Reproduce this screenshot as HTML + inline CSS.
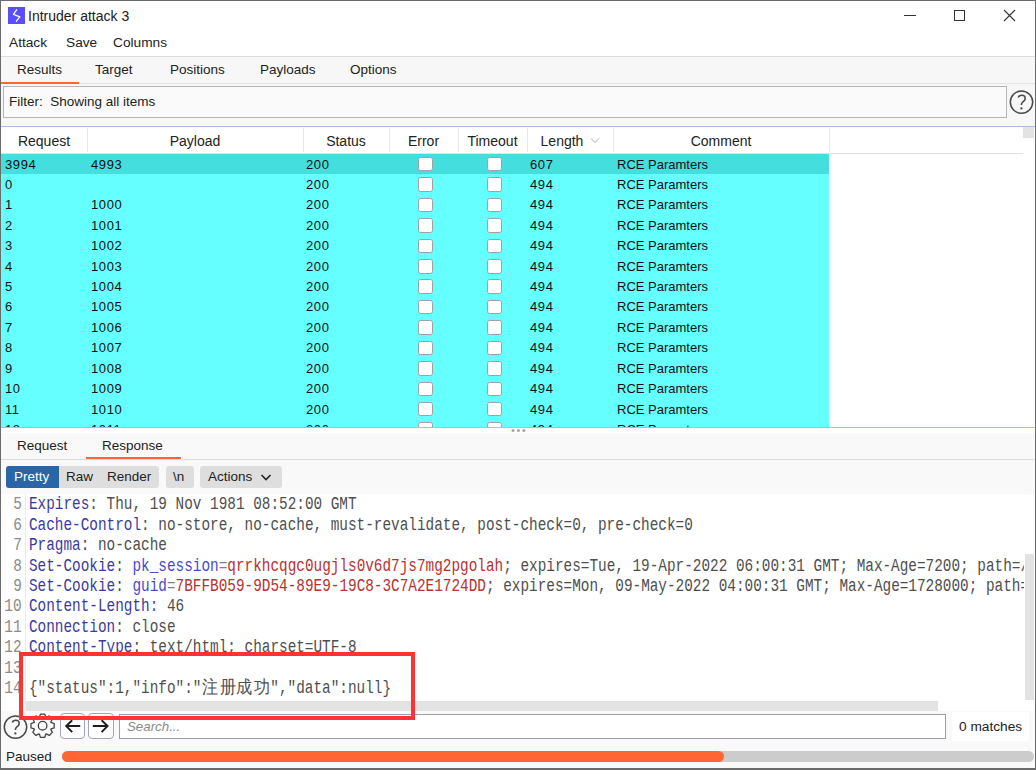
<!DOCTYPE html>
<html><head><meta charset="utf-8">
<style>
*{margin:0;padding:0;box-sizing:border-box}
html,body{width:1036px;height:770px;overflow:hidden;background:#fff}
body{position:relative;font-family:"Liberation Sans",sans-serif;font-size:14px;color:#222}
.a{position:absolute;white-space:nowrap}
.t{position:absolute;white-space:nowrap;line-height:1}
.code{font-family:"Liberation Mono",monospace;white-space:pre}
</style></head><body>
<!-- window border -->
<div class="a" style="left:0;top:0;width:1036px;height:770px;border:1px solid #6b6b6b;border-bottom:2px solid #6b6b6b;z-index:50;pointer-events:none"></div>

<!-- title bar -->
<div class="a" style="left:8px;top:7px;width:17px;height:17px;background:#5a4dfc">
<svg width="17" height="17" viewBox="0 0 17 17"><path d="M8.6 2.8 L5.5 7.4 L11.8 9.8 L8.4 14.2" fill="none" stroke="#fff" stroke-width="1.3" stroke-linejoin="round" stroke-linecap="round"/></svg>
</div>
<div class="t" style="left:28px;top:8.6px;font-size:14px;color:#1a1a1a">Intruder attack 3</div>
<!-- window controls -->
<div class="a" style="left:904px;top:15px;width:12px;height:1px;background:#333"></div>
<div class="a" style="left:954px;top:10px;width:11px;height:11px;border:1px solid #333"></div>
<svg class="a" style="left:1003px;top:9px" width="13" height="13" viewBox="0 0 13 13"><path d="M1 1 L12 12 M12 1 L1 12" stroke="#333" stroke-width="1.1"/></svg>

<!-- menu bar -->
<div class="t" style="left:9px;top:36px;font-size:13.7px">Attack</div>
<div class="t" style="left:66px;top:36px;font-size:13.7px">Save</div>
<div class="t" style="left:113px;top:36px;font-size:13.7px">Columns</div>
<div class="a" style="left:0;top:56px;width:1036px;height:1px;background:#dcdcdc"></div>

<!-- tabs -->
<div class="a" style="left:0;top:57px;width:1036px;height:70px;background:#f7f7f7"></div>
<div class="t" style="left:17px;top:62.6px;font-size:13.5px">Results</div>
<div class="t" style="left:95px;top:62.6px;font-size:13.5px">Target</div>
<div class="t" style="left:170px;top:62.6px;font-size:13.5px">Positions</div>
<div class="t" style="left:260px;top:62.6px;font-size:13.5px">Payloads</div>
<div class="t" style="left:350px;top:62.6px;font-size:13.5px">Options</div>
<div class="a" style="left:1px;top:83px;width:1034px;height:1px;background:#e4e4e4"></div>
<div class="a" style="left:1px;top:82px;width:78px;height:2px;background:#ff6633"></div>

<!-- filter -->
<div class="a" style="left:3px;top:86px;width:1004px;height:32px;border:1px solid #b5b5b5;background:#fafafa"></div>
<div class="t" style="left:9px;top:95px;font-size:13.5px">Filter:&nbsp; Showing all items</div>
<svg class="a" style="left:0;top:0;overflow:visible" width="1" height="1"><g fill="none" stroke="#4a4a4a" stroke-width="1.5"><circle cx="1021.5" cy="102.1" r="11.2"/><path d="M1018.30 97.60C1018.80 95.90 1020.00 95.30 1021.70 95.30C1023.80 95.30 1025.20 96.60 1025.20 98.40C1025.20 100.30 1023.90 101.00 1022.70 102.00C1021.80 102.80 1021.40 103.50 1021.40 105.00" stroke-width="1.6"/></g><circle cx="1021.40" cy="108.40" r="1.15" fill="#4a4a4a"/></svg>

<!-- table -->
<div class="a" style="left:1px;top:126px;width:1034px;height:1px;background:#a7bfe3"></div>
<div class="a" style="left:1px;top:427px;width:1034px;height:1px;background:#a7bfe3"></div>
<div id="table"><div class="a" style="left:1px;top:127px;width:1022px;height:26px;background:#fff"></div>
<div class="a" style="left:87px;top:128px;width:1px;height:24px;background:#e6e6e6"></div>
<div class="a" style="left:303px;top:128px;width:1px;height:24px;background:#e6e6e6"></div>
<div class="a" style="left:389px;top:128px;width:1px;height:24px;background:#e6e6e6"></div>
<div class="a" style="left:458px;top:128px;width:1px;height:24px;background:#e6e6e6"></div>
<div class="a" style="left:527px;top:128px;width:1px;height:24px;background:#e6e6e6"></div>
<div class="a" style="left:613px;top:128px;width:1px;height:24px;background:#e6e6e6"></div>
<div class="a" style="left:829px;top:128px;width:1px;height:24px;background:#e6e6e6"></div>
<div class="a" style="left:1px;top:153px;width:1022px;height:1px;background:#e2e2e2"></div>
<div class="t" style="left:1px;width:86px;top:134px;text-align:center;font-size:14px">Request</div>
<div class="t" style="left:87px;width:216px;top:134px;text-align:center;font-size:14px">Payload</div>
<div class="t" style="left:303px;width:86px;top:134px;text-align:center;font-size:14px">Status</div>
<div class="t" style="left:389px;width:69px;top:134px;text-align:center;font-size:14px">Error</div>
<div class="t" style="left:458px;width:69px;top:134px;text-align:center;font-size:14px">Timeout</div>
<div class="t" style="left:525px;width:74px;top:134px;text-align:center;font-size:14px">Length</div>
<svg class="a" style="left:590px;top:137px" width="10" height="7" viewBox="0 0 10 7"><path d="M1 1.5 L5 5.5 L9 1.5" fill="none" stroke="#aaa" stroke-width="1"/></svg>
<div class="t" style="left:613px;width:216px;top:134px;text-align:center;font-size:14px">Comment</div>
<div class="a" style="left:1023px;top:127px;width:11px;height:11px;background:#e3e3e3"></div>
<div class="a" style="left:1px;top:154px;width:1034px;height:273px;overflow:hidden">
<div class="a" style="left:0;top:-0.10px;width:828px;height:21.02px;background:#45dede"></div>
<div class="t" style="left:4px;top:3.50px;font-size:13px;letter-spacing:0.6px;color:#111">3994</div>
<div class="t" style="left:90px;top:3.50px;font-size:13px;letter-spacing:0.6px;color:#111">4993</div>
<div class="t" style="left:305px;top:3.50px;font-size:13px;letter-spacing:0.6px;color:#111">200</div>
<div class="t" style="left:529px;top:3.50px;font-size:13px;letter-spacing:0.6px;color:#111">607</div>
<div class="t" style="left:616px;top:3.50px;font-size:13px;color:#111">RCE Paramters</div>
<div class="a" style="left:417px;top:2.90px;width:14.5px;height:14.5px;background:#fff;border:1px solid #a0a0a0;border-radius:2.5px"></div>
<div class="a" style="left:486px;top:2.90px;width:14.5px;height:14.5px;background:#fff;border:1px solid #a0a0a0;border-radius:2.5px"></div>
<div class="a" style="left:0;top:20.32px;width:828px;height:21.02px;background:#66ffff"></div>
<div class="t" style="left:4px;top:23.92px;font-size:13px;letter-spacing:0.6px;color:#111">0</div>
<div class="t" style="left:305px;top:23.92px;font-size:13px;letter-spacing:0.6px;color:#111">200</div>
<div class="t" style="left:529px;top:23.92px;font-size:13px;letter-spacing:0.6px;color:#111">494</div>
<div class="t" style="left:616px;top:23.92px;font-size:13px;color:#111">RCE Paramters</div>
<div class="a" style="left:417px;top:23.32px;width:14.5px;height:14.5px;background:#fff;border:1px solid #a0a0a0;border-radius:2.5px"></div>
<div class="a" style="left:486px;top:23.32px;width:14.5px;height:14.5px;background:#fff;border:1px solid #a0a0a0;border-radius:2.5px"></div>
<div class="a" style="left:0;top:40.74px;width:828px;height:21.02px;background:#66ffff"></div>
<div class="t" style="left:4px;top:44.34px;font-size:13px;letter-spacing:0.6px;color:#111">1</div>
<div class="t" style="left:90px;top:44.34px;font-size:13px;letter-spacing:0.6px;color:#111">1000</div>
<div class="t" style="left:305px;top:44.34px;font-size:13px;letter-spacing:0.6px;color:#111">200</div>
<div class="t" style="left:529px;top:44.34px;font-size:13px;letter-spacing:0.6px;color:#111">494</div>
<div class="t" style="left:616px;top:44.34px;font-size:13px;color:#111">RCE Paramters</div>
<div class="a" style="left:417px;top:43.74px;width:14.5px;height:14.5px;background:#fff;border:1px solid #a0a0a0;border-radius:2.5px"></div>
<div class="a" style="left:486px;top:43.74px;width:14.5px;height:14.5px;background:#fff;border:1px solid #a0a0a0;border-radius:2.5px"></div>
<div class="a" style="left:0;top:61.16px;width:828px;height:21.02px;background:#66ffff"></div>
<div class="t" style="left:4px;top:64.76px;font-size:13px;letter-spacing:0.6px;color:#111">2</div>
<div class="t" style="left:90px;top:64.76px;font-size:13px;letter-spacing:0.6px;color:#111">1001</div>
<div class="t" style="left:305px;top:64.76px;font-size:13px;letter-spacing:0.6px;color:#111">200</div>
<div class="t" style="left:529px;top:64.76px;font-size:13px;letter-spacing:0.6px;color:#111">494</div>
<div class="t" style="left:616px;top:64.76px;font-size:13px;color:#111">RCE Paramters</div>
<div class="a" style="left:417px;top:64.16px;width:14.5px;height:14.5px;background:#fff;border:1px solid #a0a0a0;border-radius:2.5px"></div>
<div class="a" style="left:486px;top:64.16px;width:14.5px;height:14.5px;background:#fff;border:1px solid #a0a0a0;border-radius:2.5px"></div>
<div class="a" style="left:0;top:81.58px;width:828px;height:21.02px;background:#66ffff"></div>
<div class="t" style="left:4px;top:85.18px;font-size:13px;letter-spacing:0.6px;color:#111">3</div>
<div class="t" style="left:90px;top:85.18px;font-size:13px;letter-spacing:0.6px;color:#111">1002</div>
<div class="t" style="left:305px;top:85.18px;font-size:13px;letter-spacing:0.6px;color:#111">200</div>
<div class="t" style="left:529px;top:85.18px;font-size:13px;letter-spacing:0.6px;color:#111">494</div>
<div class="t" style="left:616px;top:85.18px;font-size:13px;color:#111">RCE Paramters</div>
<div class="a" style="left:417px;top:84.58px;width:14.5px;height:14.5px;background:#fff;border:1px solid #a0a0a0;border-radius:2.5px"></div>
<div class="a" style="left:486px;top:84.58px;width:14.5px;height:14.5px;background:#fff;border:1px solid #a0a0a0;border-radius:2.5px"></div>
<div class="a" style="left:0;top:102.00px;width:828px;height:21.02px;background:#66ffff"></div>
<div class="t" style="left:4px;top:105.60px;font-size:13px;letter-spacing:0.6px;color:#111">4</div>
<div class="t" style="left:90px;top:105.60px;font-size:13px;letter-spacing:0.6px;color:#111">1003</div>
<div class="t" style="left:305px;top:105.60px;font-size:13px;letter-spacing:0.6px;color:#111">200</div>
<div class="t" style="left:529px;top:105.60px;font-size:13px;letter-spacing:0.6px;color:#111">494</div>
<div class="t" style="left:616px;top:105.60px;font-size:13px;color:#111">RCE Paramters</div>
<div class="a" style="left:417px;top:105.00px;width:14.5px;height:14.5px;background:#fff;border:1px solid #a0a0a0;border-radius:2.5px"></div>
<div class="a" style="left:486px;top:105.00px;width:14.5px;height:14.5px;background:#fff;border:1px solid #a0a0a0;border-radius:2.5px"></div>
<div class="a" style="left:0;top:122.42px;width:828px;height:21.02px;background:#66ffff"></div>
<div class="t" style="left:4px;top:126.02px;font-size:13px;letter-spacing:0.6px;color:#111">5</div>
<div class="t" style="left:90px;top:126.02px;font-size:13px;letter-spacing:0.6px;color:#111">1004</div>
<div class="t" style="left:305px;top:126.02px;font-size:13px;letter-spacing:0.6px;color:#111">200</div>
<div class="t" style="left:529px;top:126.02px;font-size:13px;letter-spacing:0.6px;color:#111">494</div>
<div class="t" style="left:616px;top:126.02px;font-size:13px;color:#111">RCE Paramters</div>
<div class="a" style="left:417px;top:125.42px;width:14.5px;height:14.5px;background:#fff;border:1px solid #a0a0a0;border-radius:2.5px"></div>
<div class="a" style="left:486px;top:125.42px;width:14.5px;height:14.5px;background:#fff;border:1px solid #a0a0a0;border-radius:2.5px"></div>
<div class="a" style="left:0;top:142.84px;width:828px;height:21.02px;background:#66ffff"></div>
<div class="t" style="left:4px;top:146.44px;font-size:13px;letter-spacing:0.6px;color:#111">6</div>
<div class="t" style="left:90px;top:146.44px;font-size:13px;letter-spacing:0.6px;color:#111">1005</div>
<div class="t" style="left:305px;top:146.44px;font-size:13px;letter-spacing:0.6px;color:#111">200</div>
<div class="t" style="left:529px;top:146.44px;font-size:13px;letter-spacing:0.6px;color:#111">494</div>
<div class="t" style="left:616px;top:146.44px;font-size:13px;color:#111">RCE Paramters</div>
<div class="a" style="left:417px;top:145.84px;width:14.5px;height:14.5px;background:#fff;border:1px solid #a0a0a0;border-radius:2.5px"></div>
<div class="a" style="left:486px;top:145.84px;width:14.5px;height:14.5px;background:#fff;border:1px solid #a0a0a0;border-radius:2.5px"></div>
<div class="a" style="left:0;top:163.26px;width:828px;height:21.02px;background:#66ffff"></div>
<div class="t" style="left:4px;top:166.86px;font-size:13px;letter-spacing:0.6px;color:#111">7</div>
<div class="t" style="left:90px;top:166.86px;font-size:13px;letter-spacing:0.6px;color:#111">1006</div>
<div class="t" style="left:305px;top:166.86px;font-size:13px;letter-spacing:0.6px;color:#111">200</div>
<div class="t" style="left:529px;top:166.86px;font-size:13px;letter-spacing:0.6px;color:#111">494</div>
<div class="t" style="left:616px;top:166.86px;font-size:13px;color:#111">RCE Paramters</div>
<div class="a" style="left:417px;top:166.26px;width:14.5px;height:14.5px;background:#fff;border:1px solid #a0a0a0;border-radius:2.5px"></div>
<div class="a" style="left:486px;top:166.26px;width:14.5px;height:14.5px;background:#fff;border:1px solid #a0a0a0;border-radius:2.5px"></div>
<div class="a" style="left:0;top:183.68px;width:828px;height:21.02px;background:#66ffff"></div>
<div class="t" style="left:4px;top:187.28px;font-size:13px;letter-spacing:0.6px;color:#111">8</div>
<div class="t" style="left:90px;top:187.28px;font-size:13px;letter-spacing:0.6px;color:#111">1007</div>
<div class="t" style="left:305px;top:187.28px;font-size:13px;letter-spacing:0.6px;color:#111">200</div>
<div class="t" style="left:529px;top:187.28px;font-size:13px;letter-spacing:0.6px;color:#111">494</div>
<div class="t" style="left:616px;top:187.28px;font-size:13px;color:#111">RCE Paramters</div>
<div class="a" style="left:417px;top:186.68px;width:14.5px;height:14.5px;background:#fff;border:1px solid #a0a0a0;border-radius:2.5px"></div>
<div class="a" style="left:486px;top:186.68px;width:14.5px;height:14.5px;background:#fff;border:1px solid #a0a0a0;border-radius:2.5px"></div>
<div class="a" style="left:0;top:204.10px;width:828px;height:21.02px;background:#66ffff"></div>
<div class="t" style="left:4px;top:207.70px;font-size:13px;letter-spacing:0.6px;color:#111">9</div>
<div class="t" style="left:90px;top:207.70px;font-size:13px;letter-spacing:0.6px;color:#111">1008</div>
<div class="t" style="left:305px;top:207.70px;font-size:13px;letter-spacing:0.6px;color:#111">200</div>
<div class="t" style="left:529px;top:207.70px;font-size:13px;letter-spacing:0.6px;color:#111">494</div>
<div class="t" style="left:616px;top:207.70px;font-size:13px;color:#111">RCE Paramters</div>
<div class="a" style="left:417px;top:207.10px;width:14.5px;height:14.5px;background:#fff;border:1px solid #a0a0a0;border-radius:2.5px"></div>
<div class="a" style="left:486px;top:207.10px;width:14.5px;height:14.5px;background:#fff;border:1px solid #a0a0a0;border-radius:2.5px"></div>
<div class="a" style="left:0;top:224.52px;width:828px;height:21.02px;background:#66ffff"></div>
<div class="t" style="left:4px;top:228.12px;font-size:13px;letter-spacing:0.6px;color:#111">10</div>
<div class="t" style="left:90px;top:228.12px;font-size:13px;letter-spacing:0.6px;color:#111">1009</div>
<div class="t" style="left:305px;top:228.12px;font-size:13px;letter-spacing:0.6px;color:#111">200</div>
<div class="t" style="left:529px;top:228.12px;font-size:13px;letter-spacing:0.6px;color:#111">494</div>
<div class="t" style="left:616px;top:228.12px;font-size:13px;color:#111">RCE Paramters</div>
<div class="a" style="left:417px;top:227.52px;width:14.5px;height:14.5px;background:#fff;border:1px solid #a0a0a0;border-radius:2.5px"></div>
<div class="a" style="left:486px;top:227.52px;width:14.5px;height:14.5px;background:#fff;border:1px solid #a0a0a0;border-radius:2.5px"></div>
<div class="a" style="left:0;top:244.94px;width:828px;height:21.02px;background:#66ffff"></div>
<div class="t" style="left:4px;top:248.54px;font-size:13px;letter-spacing:0.6px;color:#111">11</div>
<div class="t" style="left:90px;top:248.54px;font-size:13px;letter-spacing:0.6px;color:#111">1010</div>
<div class="t" style="left:305px;top:248.54px;font-size:13px;letter-spacing:0.6px;color:#111">200</div>
<div class="t" style="left:529px;top:248.54px;font-size:13px;letter-spacing:0.6px;color:#111">494</div>
<div class="t" style="left:616px;top:248.54px;font-size:13px;color:#111">RCE Paramters</div>
<div class="a" style="left:417px;top:247.94px;width:14.5px;height:14.5px;background:#fff;border:1px solid #a0a0a0;border-radius:2.5px"></div>
<div class="a" style="left:486px;top:247.94px;width:14.5px;height:14.5px;background:#fff;border:1px solid #a0a0a0;border-radius:2.5px"></div>
<div class="a" style="left:0;top:265.36px;width:828px;height:21.02px;background:#66ffff"></div>
<div class="t" style="left:4px;top:268.96px;font-size:13px;letter-spacing:0.6px;color:#111">12</div>
<div class="t" style="left:90px;top:268.96px;font-size:13px;letter-spacing:0.6px;color:#111">1011</div>
<div class="t" style="left:305px;top:268.96px;font-size:13px;letter-spacing:0.6px;color:#111">200</div>
<div class="t" style="left:529px;top:268.96px;font-size:13px;letter-spacing:0.6px;color:#111">494</div>
<div class="t" style="left:616px;top:268.96px;font-size:13px;color:#111">RCE Paramters</div>
<div class="a" style="left:417px;top:268.36px;width:14.5px;height:14.5px;background:#fff;border:1px solid #a0a0a0;border-radius:2.5px"></div>
<div class="a" style="left:486px;top:268.36px;width:14.5px;height:14.5px;background:#fff;border:1px solid #a0a0a0;border-radius:2.5px"></div>
</div></div>
<!--END TABLE-->

<!-- lower pane -->
<div class="a" style="left:1px;top:433px;width:1034px;height:62px;background:#f9f9f9"></div>
<div class="t" style="left:17px;top:438.7px;font-size:13.5px">Request</div>
<div class="t" style="left:102px;top:438.7px;font-size:13.5px">Response</div>
<div class="a" style="left:1px;top:459px;width:1034px;height:1px;background:#dcdcdc"></div>
<div class="a" style="left:86px;top:457px;width:95px;height:2px;background:#ff6633"></div>
<svg class="a" style="left:508px;top:426px" width="20" height="9" viewBox="0 0 20 9"><g fill="#a6a6a6"><circle cx="5" cy="4.4" r="1.5"/><circle cx="10.4" cy="4.4" r="1.5"/><circle cx="15.8" cy="4.4" r="1.5"/></g></svg>

<!-- toolbar -->
<div class="a" style="left:6px;top:466px;width:153px;height:22px;background:#dedede;border-radius:3px"></div>
<div class="a" style="left:6px;top:466px;width:53px;height:22px;background:#2866a7;border-radius:3px 0 0 3px"></div>
<div class="t" style="left:14px;top:469.5px;font-size:13.5px;color:#fff">Pretty</div>
<div class="t" style="left:66px;top:469.5px;font-size:13.5px">Raw</div>
<div class="t" style="left:107px;top:469.5px;font-size:13.5px">Render</div>
<div class="a" style="left:166px;top:466px;width:28px;height:22px;background:#dedede;border-radius:3px"></div>
<div class="t" style="left:173px;top:469.5px;font-size:13.5px">\n</div>
<div class="a" style="left:200px;top:466px;width:82px;height:22px;background:#dedede;border-radius:3px"></div>
<div class="t" style="left:208px;top:469.5px;font-size:13.5px">Actions</div>
<svg class="a" style="left:260px;top:472px" width="12" height="10" viewBox="0 0 12 10"><path d="M1.5 3 L6 7.5 L10.5 3" fill="none" stroke="#222" stroke-width="1.6"/></svg>

<div id="code"><div class="a" style="left:1px;top:494px;width:1023px;height:217px;background:#fff;overflow:hidden" id="codebox">
<div class="a" style="left:24px;top:0;width:1px;height:217px;background:#ececec"></div>
<div class="a code" style="left:-80px;width:101px;top:1.20px;text-align:right;color:#8a8a8a;font-size:18px;line-height:18px"><span style="display:inline-block;transform:scaleX(0.7981);transform-origin:right">5</span></div>
<div class="a code" style="left:27.5px;top:1.20px;font-size:18px;line-height:18px;transform:scaleX(0.7981);transform-origin:left"><span style="color:#3a3a9e">Expires</span><span style="color:#4e4e4e">: Thu, 19 Nov 1981 08:52:00 GMT</span></div>
<div class="a code" style="left:-80px;width:101px;top:21.65px;text-align:right;color:#8a8a8a;font-size:18px;line-height:18px"><span style="display:inline-block;transform:scaleX(0.7981);transform-origin:right">6</span></div>
<div class="a code" style="left:27.5px;top:21.65px;font-size:18px;line-height:18px;transform:scaleX(0.7981);transform-origin:left"><span style="color:#3a3a9e">Cache-Control</span><span style="color:#4e4e4e">: no-store, no-cache, must-revalidate, post-check=0, pre-check=0</span></div>
<div class="a code" style="left:-80px;width:101px;top:42.10px;text-align:right;color:#8a8a8a;font-size:18px;line-height:18px"><span style="display:inline-block;transform:scaleX(0.7981);transform-origin:right">7</span></div>
<div class="a code" style="left:27.5px;top:42.10px;font-size:18px;line-height:18px;transform:scaleX(0.7981);transform-origin:left"><span style="color:#3a3a9e">Pragma</span><span style="color:#4e4e4e">: no-cache</span></div>
<div class="a code" style="left:-80px;width:101px;top:62.55px;text-align:right;color:#8a8a8a;font-size:18px;line-height:18px"><span style="display:inline-block;transform:scaleX(0.7981);transform-origin:right">8</span></div>
<div class="a code" style="left:27.5px;top:62.55px;font-size:18px;line-height:18px;transform:scaleX(0.7981);transform-origin:left"><span style="color:#3a3a9e">Set-Cookie</span><span style="color:#4e4e4e">: </span><span style="color:#4848d0">pk_session</span><span style="color:#808080">=</span><span style="color:#b83030">qrrkhcqgc0ugjls0v6d7js7mg2pgolah</span><span style="color:#4e4e4e">; expires=Tue, 19-Apr-2022 06:00:31 GMT; Max-Age=7200; path=/</span></div>
<div class="a code" style="left:-80px;width:101px;top:83.00px;text-align:right;color:#8a8a8a;font-size:18px;line-height:18px"><span style="display:inline-block;transform:scaleX(0.7981);transform-origin:right">9</span></div>
<div class="a code" style="left:27.5px;top:83.00px;font-size:18px;line-height:18px;transform:scaleX(0.7981);transform-origin:left"><span style="color:#3a3a9e">Set-Cookie</span><span style="color:#4e4e4e">: </span><span style="color:#4848d0">guid</span><span style="color:#808080">=</span><span style="color:#b83030">7BFFB059-9D54-89E9-19C8-3C7A2E1724DD</span><span style="color:#4e4e4e">; expires=Mon, 09-May-2022 04:00:31 GMT; Max-Age=1728000; path=/</span></div>
<div class="a code" style="left:-80px;width:101px;top:103.45px;text-align:right;color:#8a8a8a;font-size:18px;line-height:18px"><span style="display:inline-block;transform:scaleX(0.7981);transform-origin:right">10</span></div>
<div class="a code" style="left:27.5px;top:103.45px;font-size:18px;line-height:18px;transform:scaleX(0.7981);transform-origin:left"><span style="color:#3a3a9e">Content-Length</span><span style="color:#4e4e4e">: 46</span></div>
<div class="a code" style="left:-80px;width:101px;top:123.90px;text-align:right;color:#8a8a8a;font-size:18px;line-height:18px"><span style="display:inline-block;transform:scaleX(0.7981);transform-origin:right">11</span></div>
<div class="a code" style="left:27.5px;top:123.90px;font-size:18px;line-height:18px;transform:scaleX(0.7981);transform-origin:left"><span style="color:#3a3a9e">Connection</span><span style="color:#4e4e4e">: close</span></div>
<div class="a code" style="left:-80px;width:101px;top:144.35px;text-align:right;color:#8a8a8a;font-size:18px;line-height:18px"><span style="display:inline-block;transform:scaleX(0.7981);transform-origin:right">12</span></div>
<div class="a code" style="left:27.5px;top:144.35px;font-size:18px;line-height:18px;transform:scaleX(0.7981);transform-origin:left"><span style="color:#3a3a9e">Content-Type</span><span style="color:#4e4e4e">: text/html; charset=UTF-8</span></div>
<div class="a code" style="left:-80px;width:101px;top:164.80px;text-align:right;color:#8a8a8a;font-size:18px;line-height:18px"><span style="display:inline-block;transform:scaleX(0.7981);transform-origin:right">13</span></div>
<div class="a code" style="left:-80px;width:101px;top:185.25px;text-align:right;color:#8a8a8a;font-size:18px;line-height:18px"><span style="display:inline-block;transform:scaleX(0.7981);transform-origin:right">14</span></div>
<div class="a code" style="left:27.5px;top:185.25px;font-size:18px;line-height:18px;transform:scaleX(0.7981);transform-origin:left"><span style="color:#4e4e4e">{&quot;status&quot;:1,&quot;info&quot;:&quot;</span><span style="display:inline-block;width:21.599999999999998px;text-align:center;color:#4e4e4e;transform:scaleX(1.12)">注</span><span style="display:inline-block;width:21.599999999999998px;text-align:center;color:#4e4e4e;transform:scaleX(1.12)">册</span><span style="display:inline-block;width:21.599999999999998px;text-align:center;color:#4e4e4e;transform:scaleX(1.12)">成</span><span style="display:inline-block;width:21.599999999999998px;text-align:center;color:#4e4e4e;transform:scaleX(1.12)">功</span><span style="color:#4e4e4e">&quot;,&quot;data&quot;:null}</span></div>
</div>
<div class="a" style="left:1025px;top:554px;width:9px;height:146px;background:#e3e3e3"></div>
<div class="a" style="left:26px;top:701px;width:912px;height:10px;background:#e3e3e3"></div></div>
<!--END CODE-->

<!-- bottom bar -->
<div class="a" style="left:1px;top:711px;width:1034px;height:57px;background:#f9f9f9"></div>
<svg class="a" style="left:0;top:0;overflow:visible" width="1" height="1"><g fill="none" stroke="#4a4a4a" stroke-width="1.5"><circle cx="15.5" cy="727.1" r="11.2"/><path d="M12.30 722.60C12.80 720.90 14.00 720.30 15.70 720.30C17.80 720.30 19.20 721.60 19.20 723.40C19.20 725.30 17.90 726.00 16.70 727.00C15.80 727.80 15.40 728.50 15.40 730.00" stroke-width="1.6"/></g><circle cx="15.40" cy="733.40" r="1.15" fill="#4a4a4a"/></svg>
<svg class="a" style="left:0;top:700px;overflow:visible" width="1" height="1" viewBox="0 700 1 1"><g fill="none" stroke="#454545" stroke-width="1.3" stroke-linejoin="round"><path d="M51.00 722.47 L54.20 723.51 L54.20 727.89 L51.00 728.93 L50.82 729.36 L52.35 732.35 L49.25 735.45 L46.26 733.92 L45.83 734.10 L44.79 737.30 L40.41 737.30 L39.37 734.10 L38.94 733.92 L35.95 735.45 L32.85 732.35 L34.38 729.36 L34.20 728.93 L31.00 727.89 L31.00 723.51 L34.20 722.47 L34.38 722.04 L32.85 719.05 L35.95 715.95 L38.94 717.48 L39.37 717.30 L40.41 714.10 L44.79 714.10 L45.83 717.30 L46.26 717.48 L49.25 715.95 L52.35 719.05 L50.82 722.04Z"/><circle cx="42.6" cy="725.7" r="4.3"/></g></svg>
<div class="a" style="left:60px;top:713px;width:25px;height:26px;border:1px solid #a3a3bd;border-radius:4px;background:#fdfdfd"></div>
<svg class="a" style="left:0;top:700px;overflow:visible" width="1" height="1" viewBox="0 700 1 1"><path d="M80.2 726H66.2M72.2 720.2L66.2 726L72.2 732.1" fill="none" stroke="#1e1e1e" stroke-width="1.9"/></svg>
<div class="a" style="left:88px;top:713px;width:26px;height:26px;border:1px solid #a3a3bd;border-radius:4px;background:#fdfdfd"></div>
<svg class="a" style="left:0;top:700px;overflow:visible" width="1" height="1" viewBox="0 700 1 1"><path d="M92.8 726H107.6M101.6 720.2L107.6 726L101.6 732.1" fill="none" stroke="#1e1e1e" stroke-width="1.9"/></svg>
<div class="a" style="left:119px;top:714px;width:827px;height:25px;border:1px solid #9c9cb3;background:#fff"></div>
<div class="t" style="left:127px;top:720.3px;font-size:13.3px;font-style:italic;color:#8a8a8a">Search...</div>
<div class="a" style="left:952px;top:712px;width:77px;height:29px;background:#fff"></div>
<div class="t" style="left:959px;top:719.8px;font-size:13.7px;color:#222">0 matches</div>
<div class="t" style="left:6px;top:749.6px;font-size:13.5px;color:#222">Paused</div>
<div class="a" style="left:62px;top:751px;width:972px;height:11px;background:#cccccc;border-radius:5.5px"></div>
<div class="a" style="left:62px;top:751px;width:662px;height:11px;background:#ff6633;border-radius:5.5px"></div>
<!-- red highlight box -->
<div class="a" style="left:19px;top:652px;width:396px;height:68px;border:4px solid #ff3333;z-index:40"></div>
</body></html>
